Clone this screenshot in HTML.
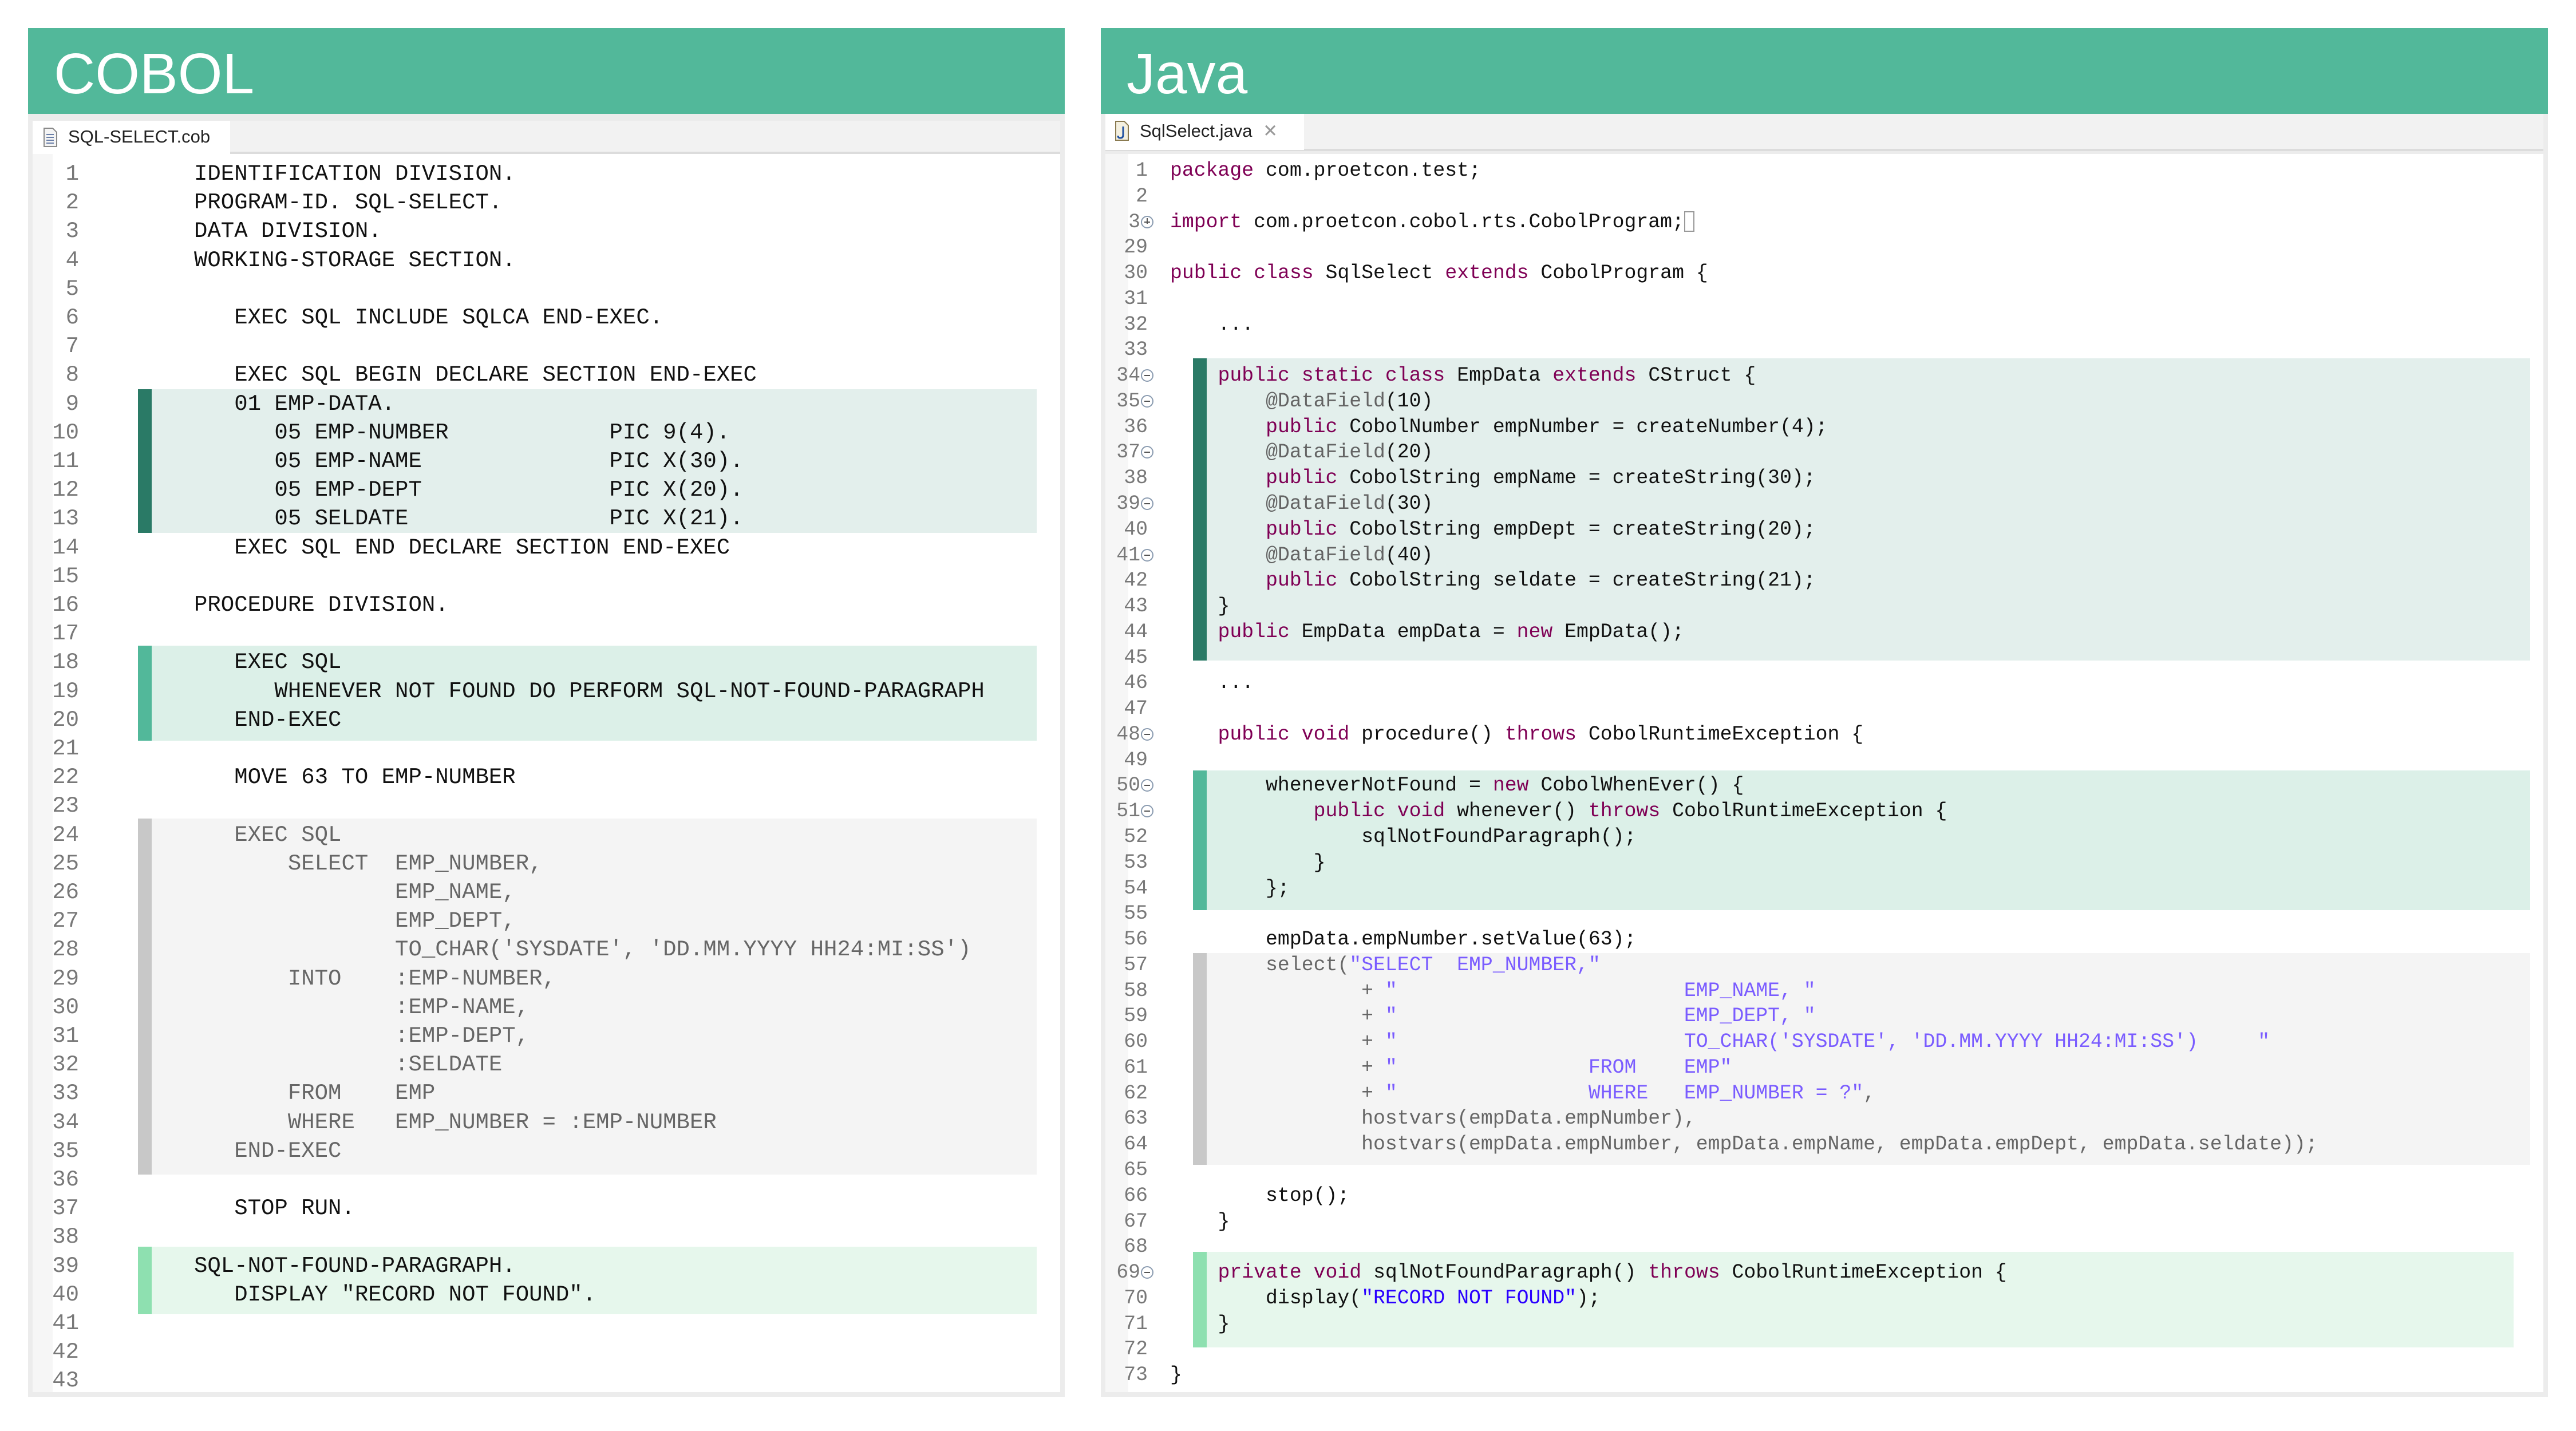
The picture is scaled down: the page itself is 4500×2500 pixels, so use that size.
<!DOCTYPE html>
<html><head><meta charset="utf-8"><style>
*{margin:0;padding:0;box-sizing:border-box}
body{width:4500px;height:2500px;background:#fff;position:relative;overflow:hidden;font-family:"Liberation Mono",monospace}
.panel{position:absolute;top:49px;height:2392px;background:#ececec}
.hdr{position:absolute;left:0;right:0;top:0;height:150px;background:#52b89a;color:#fff;font-family:"Liberation Sans",sans-serif;font-size:100px;padding-left:45px;line-height:160px}
.tabbar{position:absolute;left:8px;right:8px;top:162px;height:58px;background:#f2f2f2;border-bottom:4px solid #dcdcdc}
.tab{position:absolute;left:0;top:0;height:58px;background:#fff;font-family:"Liberation Sans",sans-serif;font-size:31px;color:#222;line-height:56px;padding-left:62px}
.ed{position:absolute;left:8px;right:8px;top:220px;bottom:9px;background:#fff}
.gut{position:absolute;left:0;top:0;bottom:0;background:#f7f7f7}
.ln{position:absolute;white-space:pre;color:#111}
.num{position:absolute;text-align:right;color:#787878}
.blk{position:absolute}
.k{color:#7f0055}.s{color:#2a00ff}.a{color:#646464}
.g{color:#666}.g .s{color:#7a5cff}
.fold{position:absolute;width:22px;height:22px;border:2px solid #8a9bb0;border-radius:50%;background:#fff}
.fold:after{content:"";position:absolute;left:4px;top:8px;width:10px;height:2px;background:#555}
</style></head><body>

<!-- COBOL -->
<div class="panel" style="left:49px;width:1811px">
 <div class="hdr">COBOL</div>
 <div class="tabbar"><div class="tab" style="width:345px">SQL-SELECT.cob <span style="color:#999;margin-left:10px">✕</span>
  <svg style="position:absolute;left:18px;top:12px" width="26" height="34"><path d="M2 1h15l7 7v25H2z" fill="#f4f4f4" stroke="#8a8a8a" stroke-width="2"/><path d="M6 12h13M6 17h13M6 22h13M6 27h13" stroke="#6a7fa8" stroke-width="2"/></svg></div></div>
</div>
<div class="ed" style="left:57px;width:1795px;top:269px;bottom:68px"></div>
<div class="gut" style="left:57px;width:35px;top:269px;height:2163px;position:absolute;background:#f6f6f6"></div>

<div class="blk" style="left:241px;top:680px;width:1570px;height:251px;background:#e3efec;border-left:24px solid #2a7a66"></div>
<div class="blk" style="left:241px;top:1128px;width:1570px;height:166px;background:#dcf0e8;border-left:24px solid #52b89a"></div>
<div class="blk" style="left:241px;top:1430px;width:1570px;height:622px;background:#f4f4f4;border-left:24px solid #c8c8c8"></div>
<div class="blk" style="left:241px;top:2178px;width:1570px;height:118px;background:#e6f7ec;border-left:24px solid #8ee0b0"></div>

<div id="cob" style="position:absolute;left:0;top:0;font-size:39px"></div>

<!-- Java -->
<div class="panel" style="left:1923px;width:2528px">
 <div class="hdr">Java</div>
 <div class="tabbar" style="top:150px;height:65px"><div class="tab" style="width:347px;height:63px;line-height:60px;padding-left:60px">SqlSelect.java <span style="color:#999;margin-left:10px">✕</span>
  <svg style="position:absolute;left:16px;top:12px" width="26" height="36"><path d="M2 1h15l7 7v26H2z" fill="#f4f0e0" stroke="#8a7a50" stroke-width="2"/><path d="M15 10v15q0 5-5 5q-4 0-4-4" fill="none" stroke="#2050a0" stroke-width="3"/></svg></div></div>
</div>
<div class="ed" style="left:1931px;width:2512px;top:269px;bottom:68px"></div>
<div style="position:absolute;left:1931px;width:40px;top:269px;height:2163px;background:#f6f6f6"></div>

<div class="blk" style="left:2084px;top:626px;width:2336px;height:528px;background:#e3efec;border-left:24px solid #2a7a66"></div>
<div class="blk" style="left:2084px;top:1346px;width:2336px;height:244px;background:#dcf0e8;border-left:24px solid #52b89a"></div>
<div class="blk" style="left:2084px;top:1665px;width:2336px;height:370px;background:#f4f4f4;border-left:24px solid #c8c8c8"></div>
<div class="blk" style="left:2084px;top:2187px;width:2307px;height:167px;background:#e6f7ec;border-left:24px solid #8ee0b0"></div>

<div id="jav" style="position:absolute;left:0;top:0;font-size:34.8px"></div>

<script>
var cob={1:"IDENTIFICATION DIVISION.",2:"PROGRAM-ID. SQL-SELECT.",3:"DATA DIVISION.",4:"WORKING-STORAGE SECTION.",
6:"   EXEC SQL INCLUDE SQLCA END-EXEC.",8:"   EXEC SQL BEGIN DECLARE SECTION END-EXEC",9:"   01 EMP-DATA.",
10:"      05 EMP-NUMBER            PIC 9(4).",11:"      05 EMP-NAME              PIC X(30).",12:"      05 EMP-DEPT              PIC X(20).",13:"      05 SELDATE               PIC X(21).",
14:"   EXEC SQL END DECLARE SECTION END-EXEC",16:"PROCEDURE DIVISION.",18:"   EXEC SQL",19:"      WHENEVER NOT FOUND DO PERFORM SQL-NOT-FOUND-PARAGRAPH",20:"   END-EXEC",
22:"   MOVE 63 TO EMP-NUMBER",24:"   EXEC SQL",25:"       SELECT  EMP_NUMBER,",26:"               EMP_NAME,",27:"               EMP_DEPT,",28:"               TO_CHAR('SYSDATE', 'DD.MM.YYYY HH24:MI:SS')",
29:"       INTO    :EMP-NUMBER,",30:"               :EMP-NAME,",31:"               :EMP-DEPT,",32:"               :SELDATE",33:"       FROM    EMP",34:"       WHERE   EMP_NUMBER = :EMP-NUMBER",35:"   END-EXEC",
37:"   STOP RUN.",39:"SQL-NOT-FOUND-PARAGRAPH.",40:"   DISPLAY \"RECORD NOT FOUND\"."};
var h="";
for(var n=1;n<=43;n++){var t=279+(n-1)*50.2;
h+='<div class="num" style="left:60px;width:78px;top:'+t+'px;line-height:50px">'+n+'</div>';
if(cob[n])h+='<div class="ln" style="left:339px;top:'+t+'px;line-height:50px;'+(n>=24&&n<=35?'color:#666':'')+'">'+cob[n].replace(/&/g,'&amp;')+'</div>';}
document.getElementById('cob').innerHTML=h;
function K(x){return '<span class="k">'+x+'</span>'}function S(x){return '<span class="s">'+x+'</span>'}function A(x){return '<span class="a">'+x+'</span>'}
var sp=function(n){return ' '.repeat(n)};
var jl=[[1,K('package')+' com.proetcon.test;'],[2,''],[3,K('import')+' com.proetcon.cobol.rts.CobolProgram;<span style="display:inline-block;width:18px;height:36px;border:2px solid #999;vertical-align:middle"></span>'],
[29,''],[30,K('public')+' '+K('class')+' SqlSelect '+K('extends')+' CobolProgram {'],[31,''],[32,'    ...'],[33,''],
[34,'    '+K('public')+' '+K('static')+' '+K('class')+' EmpData '+K('extends')+' CStruct {'],
[35,'        '+A('@DataField')+'(10)'],[36,'        '+K('public')+' CobolNumber empNumber = createNumber(4);'],
[37,'        '+A('@DataField')+'(20)'],[38,'        '+K('public')+' CobolString empName = createString(30);'],
[39,'        '+A('@DataField')+'(30)'],[40,'        '+K('public')+' CobolString empDept = createString(20);'],
[41,'        '+A('@DataField')+'(40)'],[42,'        '+K('public')+' CobolString seldate = createString(21);'],
[43,'    }'],[44,'    '+K('public')+' EmpData empData = '+K('new')+' EmpData();'],[45,''],[46,'    ...'],[47,''],
[48,'    '+K('public')+' '+K('void')+' procedure() '+K('throws')+' CobolRuntimeException {'],[49,''],
[50,'        wheneverNotFound = '+K('new')+' CobolWhenEver() {'],[51,'            '+K('public')+' '+K('void')+' whenever() '+K('throws')+' CobolRuntimeException {'],
[52,'                sqlNotFoundParagraph();'],[53,'            }'],[54,'        };'],[55,''],
[56,'        empData.empNumber.setValue(63);'],
[57,'<span class="g">        select('+S('"SELECT  EMP_NUMBER,"')+'</span>'],
[58,'<span class="g">                + '+S('"'+sp(24)+'EMP_NAME, "')+'</span>'],
[59,'<span class="g">                + '+S('"'+sp(24)+'EMP_DEPT, "')+'</span>'],
[60,'<span class="g">                + '+S('"'+sp(24)+"TO_CHAR('SYSDATE', 'DD.MM.YYYY HH24:MI:SS')     \"")+'</span>'],
[61,'<span class="g">                + '+S('"'+sp(16)+'FROM    EMP"')+'</span>'],
[62,'<span class="g">                + '+S('"'+sp(16)+'WHERE   EMP_NUMBER = ?"')+',</span>'],
[63,'<span class="g">                hostvars(empData.empNumber),</span>'],
[64,'<span class="g">                hostvars(empData.empNumber, empData.empName, empData.empDept, empData.seldate));</span>'],
[65,''],[66,'        stop();'],[67,'    }'],[68,''],
[69,'    '+K('private')+' '+K('void')+' sqlNotFoundParagraph() '+K('throws')+' CobolRuntimeException {'],
[70,'        display('+S('"RECORD NOT FOUND"')+');'],[71,'    }'],[72,''],[73,'}']];
var folds={34:1,35:1,37:1,39:1,41:1,48:1,50:1,51:1,69:1};
h="";
for(var r=0;r<jl.length;r++){var t=276+r*44.77,n=jl[r][0];
h+='<div class="num" style="left:1940px;width:65px;top:'+t+'px;line-height:45px'+(folds[n]||n==3?';width:52px':'')+'">'+n+'</div>';
if(folds[n])h+='<div class="fold" style="left:1993px;top:'+(t+11)+'px"></div>';
if(n==3)h+='<div class="fold" style="left:1993px;top:'+(t+11)+'px"></div><div style="position:absolute;left:2003px;top:'+(t+15)+'px;width:2px;height:10px;background:#555"></div>';
h+='<div class="ln" style="left:2044px;top:'+t+'px;line-height:45px">'+jl[r][1]+'</div>';}
document.getElementById('jav').innerHTML=h;
</script>
</body></html>
